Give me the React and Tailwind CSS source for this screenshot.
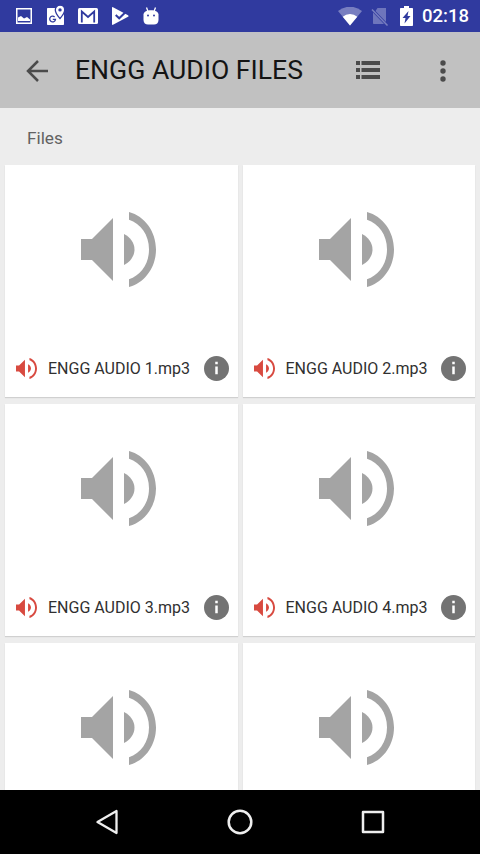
const files = [
  { id: 1, name: 'ENGG AUDIO 1.mp3' },
  { id: 2, name: 'ENGG AUDIO 2.mp3' },
  { id: 3, name: 'ENGG AUDIO 3.mp3' },
  { id: 4, name: 'ENGG AUDIO 4.mp3' },
  { id: 5 },
  { id: 6 },
];

function Speaker({ className }) {
  return (
    <svg viewBox="0 0 75 75" fill="currentColor" className={className}>
      <path d="M0 27h11L32 6v63L11 48H0z" />
      <path d="M43 22v31c6.200-3 10.500-9 10.500-15.500S49.200 25 43 22z" />
      <path d="M48 0v7.800c11.600 3.800 20 15 20 29.700s-8.400 25.900-20 29.700V75c15.700-4.100 27-19.500 27-37.500S63.700 4.100 48 0z" />
    </svg>
  );
}

function StatusBar() {
  return (
    <header className="flex h-8 shrink-0 items-center bg-[#303a9f] pr-[11px] pl-4 text-white">
      {/* Notifications */}
      <div className="flex flex-1 items-center">
        <svg viewBox="0 0 16 16" className="h-4 w-4">
          <path fill="currentColor" fillRule="evenodd" d="M0 0h16v16H0zM1.500 1.500v13h13v-13z" />
          <path fill="currentColor" d="M2 13V9.500L5 8l3 2.500L11 9l3 2.500V13z" />
        </svg>
        <svg viewBox="0 0 18 20" className="mb-0.5 ml-[15px] h-5 w-[18px]">
          <path fill="currentColor" d="M1 3h16v16c0 .6-.4 1-1 1H1c-.6 0-1-.4-1-1V4c0-.6.4-1 1-1z" />
          <path fill="currentColor" stroke="#303a9f" strokeWidth="1.300" d="M13 .2a4.700 4.700 0 0 0-4.700 4.700c0 3.200 4.700 8.600 4.700 8.600s4.700-5.400 4.700-8.600A4.700 4.700 0 0 0 13 .2z" />
          <circle cx="13" cy="4.900" r="1.700" fill="#303a9f" />
          <path fill="none" stroke="#303a9f" strokeWidth="1.300" d="M7.600 11.900a2.900 2.900 0 1 0 .9 2.500H5.800" />
        </svg>
        <svg viewBox="0 0 20 16" className="ml-[13px] h-4 w-5">
          <rect width="20" height="16" rx="1.500" fill="currentColor" />
          <path fill="none" stroke="#303a9f" strokeWidth="1.800" d="M3.800 14.500V3.500L10 9l6.200-5.500v11" />
        </svg>
        <svg viewBox="0 0 17 18" className="ml-[14px] h-[18px] w-[17px]">
          <path fill="currentColor" d="M1 .2 16 8.200c.8.500.8 1.100 0 1.600L1 17.800c-.6.300-1 0-1-.6V.8C0 .2.400-.1 1 .2z" />
          <path fill="none" stroke="#303a9f" strokeWidth="2" d="m3.700 8 3.500 3.300 7.300-7" />
        </svg>
        <svg viewBox="0 0 16 18" className="ml-[14px] h-[18px] w-4">
          <path stroke="currentColor" strokeWidth="1.300" d="m3.500.5 1.500 4M12.500.5l-1.500 4" />
          <path fill="currentColor" d="M.5 7.500C1 4.300 4 3.300 8 3.300s7 1 7.500 4.200v5.500c0 3-2 4.500-4.500 4.500H5C2.500 17.500.5 16 .5 13z" />
          <circle cx="5" cy="8.500" r="1" fill="#303a9f" />
          <circle cx="11" cy="8.500" r="1" fill="#303a9f" />
        </svg>
      </div>
      {/* System icons */}
      <svg viewBox="0 0 24 19" className="mr-[9px] h-[19px] w-6">
        <path fill="currentColor" fillOpacity=".35" d="M12 18.500 0 4a19 19 0 0 1 24 0z" />
        <path fill="currentColor" d="M12 18.500 4.700 9.700a11.500 11.500 0 0 1 14.600 0z" />
      </svg>
      <svg viewBox="0 0 18 19" className="mr-[11px] h-[19px] w-[18px]">
        <path fill="currentColor" fillOpacity=".3" d="M6.500 1H15v14L4.500 4zM2 5.500 13 17H3c-.6 0-1-.4-1-1z" />
        <path stroke="currentColor" strokeOpacity=".35" strokeWidth="1.500" d="m1 2.500 15.500 16" />
      </svg>
      <svg viewBox="0 0 13 20" className="mr-[9px] h-5 w-[13px]">
        <path fill="currentColor" d="M4 0h5v2h3c.6 0 1 .4 1 1v16c0 .6-.4 1-1 1H1c-.6 0-1-.4-1-1V3c0-.6.400-1 1-1h3z" />
        <path fill="#303a9f" d="M8.500 5 2.500 12h3l-1 5.500 6-7.500h-3z" />
      </svg>
      <span className="text-[18.500px] leading-8 font-medium">02:18</span>
    </header>
  );
}

function Toolbar() {
  return (
    <div className="flex h-[76px] shrink-0 items-center border-t-[6px] border-[#c1c1c5] bg-[#c1c1c1] pr-[34px] pb-1.5 pl-[26px] text-[#4b4b4b]">
      <svg viewBox="0 0 22 22" fill="none" stroke="currentColor" strokeWidth="2.500" className="mt-0.5 h-[22px] w-[22px]">
        <path d="M22 11H2M12 1 2 11l10 10" />
      </svg>
      <h1 className="mb-px ml-[27px] flex-1 text-[26.600px] leading-8 whitespace-nowrap text-[#141414]">
        ENGG AUDIO FILES
      </h1>
      <svg viewBox="0 0 24 18" fill="currentColor" className="h-[18px] w-6">
        <path d="M0 0h4v4H0zM5.500 0H24v4H5.500zM0 7h4v4H0zM5.500 7H24v4H5.500zM0 14h4v4H0zM5.500 14H24v4H5.500z" />
      </svg>
      <svg viewBox="0 0 6 22" fill="currentColor" className="mt-0.5 ml-[60px] h-[22px] w-1.5">
        <circle cx="3" cy="3" r="2.700" />
        <circle cx="3" cy="11" r="2.700" />
        <circle cx="3" cy="19" r="2.700" />
      </svg>
    </div>
  );
}

function FileCard({ name }) {
  return (
    <div className="flex h-[232px] flex-col bg-white shadow-[0_1px_1px_rgba(0,0,0,0.12)]">
      <div className="flex h-[170px] shrink-0 items-center justify-center pr-[5px] pb-0.5">
        <Speaker className="h-[75px] w-[75px] text-[#a4a4a4]" />
      </div>
      {name && (
        <div className="flex h-[66px] shrink-0 items-center pr-[9px] pl-[11px]">
          <Speaker className="h-[21px] w-[21px] text-[#d84a40]" />
          <span className="mt-px ml-[11px] flex-1 text-[16px] whitespace-nowrap text-[#303030]">{name}</span>
          <svg viewBox="0 0 24 24" className="h-[25px] w-[25px]">
            <circle cx="12" cy="12" r="12" fill="#737373" />
            <path fill="#fff" d="M10.800 5.500h2.400v2.400h-2.400zM10.800 10h2.400v7.500h-2.400z" />
          </svg>
        </div>
      )}
    </div>
  );
}

function NavBar() {
  return (
    <nav className="flex h-16 shrink-0 items-center justify-between bg-black px-[95px] text-[#eeeeee]">
      <svg viewBox="0 0 24 26" fill="none" stroke="currentColor" strokeWidth="2.300" strokeLinejoin="round" className="h-[26px] w-6">
        <path d="M21.500 2v22L2.500 13z" />
      </svg>
      <svg viewBox="0 0 26 26" fill="none" stroke="currentColor" strokeWidth="2.500" className="h-[26px] w-[26px]">
        <circle cx="13" cy="13" r="11.300" />
      </svg>
      <svg viewBox="0 0 24 24" fill="none" stroke="currentColor" strokeWidth="2.500" strokeLinejoin="round" className="h-6 w-6">
        <path d="M2 2h20v20H2z" />
      </svg>
    </nav>
  );
}

export default function App() {
  return (
    <div className="flex h-[854px] w-[480px] flex-col overflow-hidden bg-[#ededed] font-['Roboto',sans-serif]">
      <StatusBar />
      <Toolbar />
      <main className="min-h-0 flex-1 overflow-hidden">
        <h2 className="flex h-[57px] items-center pt-1 pl-[27px] text-[17.200px] text-[#626262]">Files</h2>
        <div className="grid grid-cols-2 gap-x-[5px] gap-y-[7px] px-[5px]">
          {files.map((file) => (
            <FileCard key={file.id} name={file.name} />
          ))}
        </div>
      </main>
      <NavBar />
    </div>
  );
}
